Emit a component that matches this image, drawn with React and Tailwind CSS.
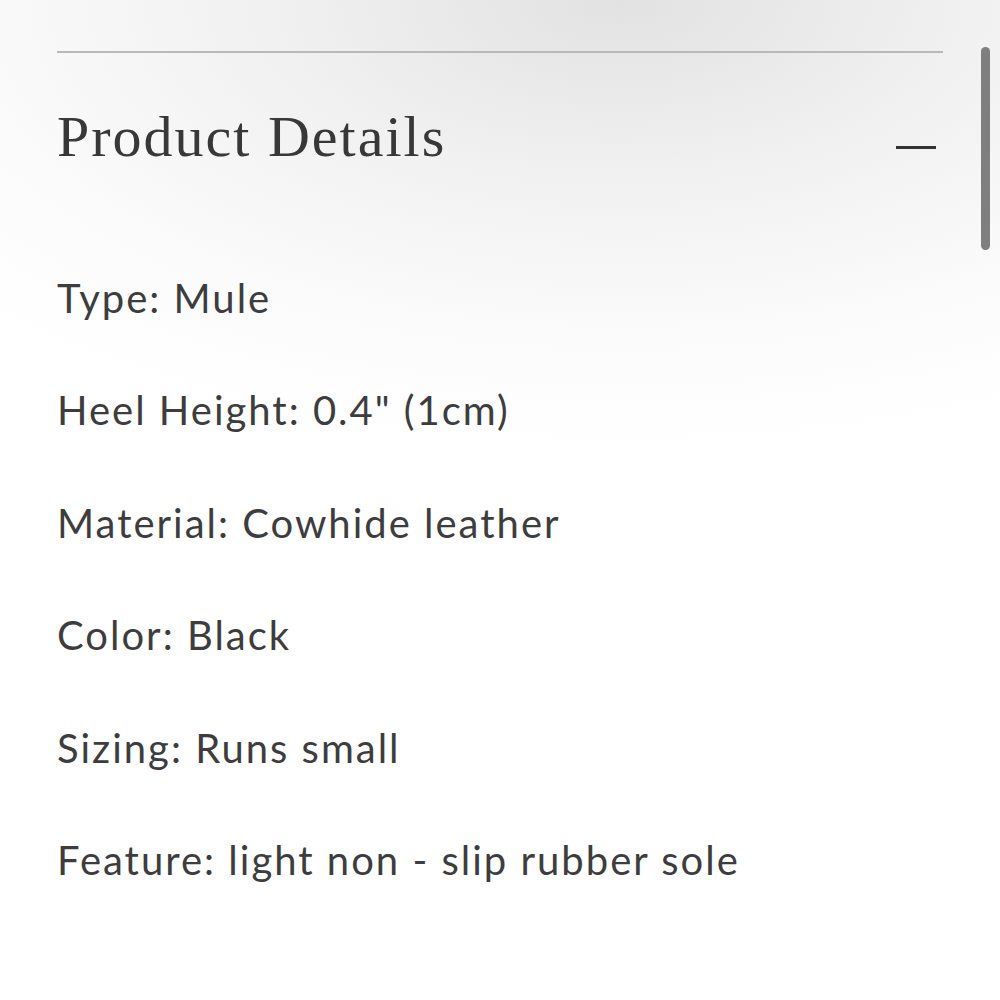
export default function App() {
  const details = [
    "Type: Mule",
    "Heel Height: 0.4\" (1cm)",
    "Material: Cowhide leather",
    "Color: Black",
    "Sizing: Runs small",
    "Feature: light non - slip rubber sole",
  ];

  return (
    <div className="relative w-[1000px] h-[1000px] overflow-hidden bg-[radial-gradient(ellipse_90%_45%_at_62%_0%,#e2e2e2_0%,#f1f1f1_40%,#fbfbfb_75%,#ffffff_100%)]">
      <div className="pt-[51px] px-[57px]">
        {/* divider */}
        <div className="h-[2px] bg-[#b9b9b9]" />

        {/* accordion header */}
        <div className="h-[170px] flex items-center justify-between pb-[2px]">
          <h2 className="font-['Liberation_Serif',serif] text-[58px] tracking-[2px] text-[#383838] leading-none">
            Product Details
          </h2>
          <span className="block w-[40px] h-[3px] bg-[#333333] mr-[7px] mt-[20px]" />
        </div>

        {/* detail list */}
        <ul className="pt-[19px] font-['Lato',sans-serif] text-[40px] tracking-[2px] text-[#3d3d3d]">
          {details.map(d => (
            <li key={d} className="h-[112.4px] leading-[112.4px]">{d}</li>
          ))}
        </ul>
      </div>

      {/* scrollbar thumb */}
      <div className="absolute left-[981px] top-[47px] w-[9px] h-[203px] rounded-full bg-[#7f7f7f]" />
    </div>
  );
}
